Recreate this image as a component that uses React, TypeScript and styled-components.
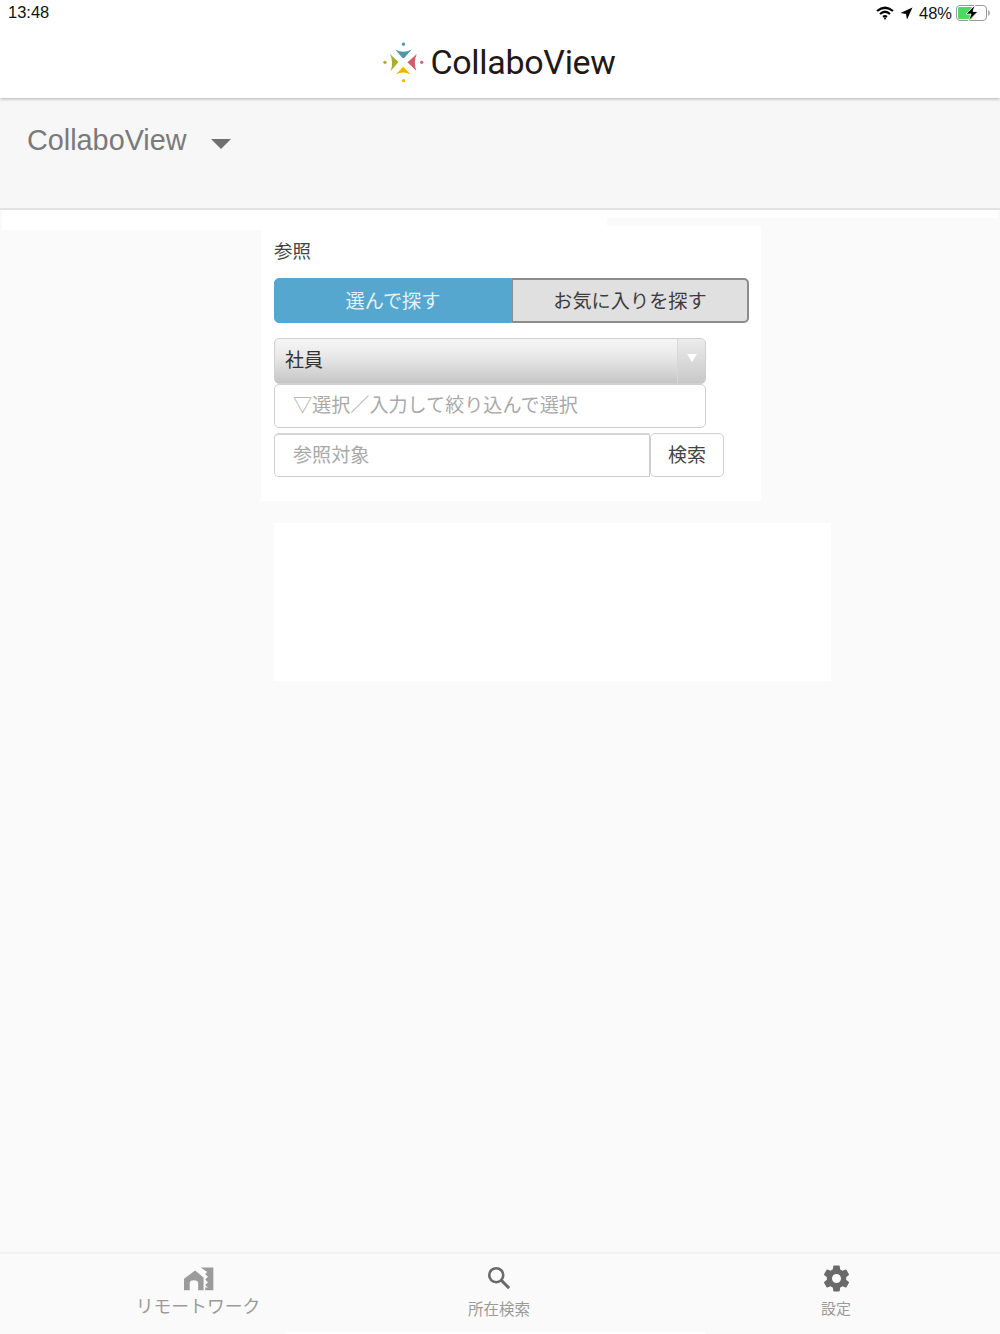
import React from "react";
import styled, { createGlobalStyle } from "styled-components";

const Global = createGlobalStyle`
  html, body { margin: 0; padding: 0; background: #fafafa; }
  body { font-family: "Noto Sans CJK JP", "Liberation Sans", sans-serif; }
  * { box-sizing: border-box; }
`;

const Page = styled.div`
  width: 1000px;
  height: 1334px;
  display: flex;
  flex-direction: column;
  overflow: hidden;
  background: #fafafa;
`;

const TopHeader = styled.header`
  height: 98px;
  background: #fff;
  box-shadow: 0 1px 3px rgba(0, 0, 0, 0.28);
  display: flex;
  flex-direction: column;
  position: relative;
  z-index: 1;
  flex: none;
`;

const StatusBar = styled.div`
  height: 26px;
  padding: 3px 9px 0 8px;
  display: flex;
  justify-content: space-between;
  align-items: flex-start;
  font-family: "Liberation Sans", sans-serif;
  font-size: 16.5px;
  line-height: 18px;
  color: #111;
`;

const StatusRight = styled.div`
  display: flex;
  align-items: center;
  height: 18px;
  margin-top: 1px;
`;

const Percent = styled.span`
  margin: 0 4px 0 6px;
`;

const BrandRow = styled.div`
  flex: 1;
  display: flex;
  align-items: flex-start;
  justify-content: center;
  padding: 16px 2px 0 0;
  gap: 5px;
`;

const BrandText = styled.span`
  font-family: "Roboto", "Liberation Sans", sans-serif;
  font-size: 34px;
  line-height: 40px;
  letter-spacing: -0.3px;
  color: #231815;
`;

const SubBar = styled.div`
  height: 112px;
  flex: none;
  background: #f7f7f7;
  border-bottom: 2px solid #e2e2e2;
  padding: 24px 0 0 27px;
  display: flex;
  align-items: flex-start;
`;

const SubTitle = styled.span`
  font-family: "Liberation Sans", sans-serif;
  font-size: 28.8px;
  line-height: 36px;
  color: #7a7a7a;
`;

const SubCaret = styled.span`
  width: 0;
  height: 0;
  margin: 17px 0 0 24px;
  border-left: 10px solid transparent;
  border-right: 10px solid transparent;
  border-top: 10px solid #707070;
`;

const Main = styled.main`
  flex: 1;
  padding: 16px 0 0 261px;
  background:
    linear-gradient(#fff, #fff) 2px 0 / 996px 8px no-repeat,
    linear-gradient(#fff, #fff) 2px 0 / 605px 16px no-repeat,
    linear-gradient(#fff, #fff) 2px 0 / 258px 20px no-repeat,
    #fafafa;
`;

const Card = styled.section`
  width: 500px;
  height: 275px;
  background: #fff;
  padding: 12px 13px 0;
`;

const CardLabel = styled.div`
  font-size: 18.5px;
  line-height: 24px;
  color: #444;
  margin-bottom: 16px;
`;

const Segment = styled.div`
  display: flex;
  width: 475px;
  height: 45px;
  margin-bottom: 15px;
`;

const SegmentButton = styled.div<{ $active?: boolean }>`
  height: 45px;
  width: ${(p) => (p.$active ? "238px" : "237px")};
  display: flex;
  align-items: center;
  justify-content: center;
  font-size: 19.2px;
  line-height: 24px;
  padding-bottom: 1px;
  border: 1px solid ${(p) => (p.$active ? "#55a7d0" : "#8c8c8c")};
  border-width: ${(p) => (p.$active ? "1px" : "2px 2px 2px 1px")};
  border-radius: ${(p) => (p.$active ? "5px 0 0 5px" : "0 5px 5px 0")};
  background: ${(p) => (p.$active ? "#55a7d0" : "#e0e0e0")};
  color: ${(p) => (p.$active ? "#e4f1f8" : "#3c3c3c")};
`;

const SelectBox = styled.div`
  width: 432px;
  height: 46px;
  display: flex;
  justify-content: space-between;
  border: 1px solid #d0d0d0;
  border-radius: 5px;
  background: linear-gradient(#f6f6f6 0%, #e8e8e8 40%, #c6c6c6 100%);
  color: #333;
  font-size: 19px;
  line-height: 40px;
  padding-left: 10px;
`;

const SelectHandle = styled.span`
  width: 28px;
  display: flex;
  align-items: center;
  justify-content: center;
  padding-bottom: 6px;
  border-left: 1px solid #d8d8d8;
  background: linear-gradient(#ececec, #c8c8c8);
  border-radius: 0 5px 5px 0;
  &::after {
    content: "";
    border-left: 5px solid transparent;
    border-right: 5px solid transparent;
    border-top: 8px solid #fff;
  }
`;

const Field = styled.div<{ $w: number }>`
  width: ${(p) => p.$w}px;
  height: 44px;
  border: 1px solid #cfcfcf;
  border-radius: 5px;
  background: #fff;
  padding-left: 18px;
  font-size: 19.1px;
  line-height: 39px;
  color: #a9a9a9;
  white-space: nowrap;
`;

const SearchRow = styled.div`
  display: flex;
  margin-top: 5px;
`;

const SearchField = styled(Field)`
  border-radius: 5px 0 0 5px;
  border-top: 2px solid #d6d6d6;
`;

const SearchButton = styled.div`
  width: 74px;
  height: 44px;
  border: 1px solid #cfcfcf;
  border-radius: 5px;
  background: #fff;
  font-size: 19px;
  line-height: 40px;
  color: #444;
  text-align: center;
`;

const ResultBox = styled.div`
  width: 557px;
  height: 158px;
  margin: 22px 0 0 13px;
  background: #fff;
`;

const TabBar = styled.nav`
  height: 82px;
  flex: none;
  display: flex;
  border-top: 2px solid #f3f3f3;
  background:
    linear-gradient(#fff, #fff) 285px 78px / 420px 4px no-repeat,
    #fafafa;
`;

const TabItem = styled.div<{ $w?: number; $skip?: number }>`
  width: ${(p) => (p.$w ? `${p.$w}px` : "auto")};
  flex: ${(p) => (p.$w ? "none" : 1)};
  margin-left: ${(p) => p.$skip ?? 0}px;
  display: flex;
  flex-direction: column;
  align-items: center;
  padding-top: 10px;
`;

const TabIcon = styled.div`
  height: 28px;
  display: flex;
  align-items: center;
  justify-content: center;
`;

const TabLabel = styled.span<{ $size: number; $gap: number }>`
  font-size: ${(p) => p.$size}px;
  line-height: 20px;
  margin-top: ${(p) => p.$gap}px;
  color: #9a9a9a;
  white-space: nowrap;
`;

const Logo = () => (
  <svg width="43" height="42" viewBox="36 36 130 126" style={{ flex: "none" }}>
    <circle cx="101" cy="42" r="5" fill="#4f97a8" />
    <circle cx="45" cy="97" r="5" fill="#a9ae2c" />
    <circle cx="156" cy="97" r="5" fill="#d2606a" />
    <circle cx="101" cy="152" r="5" fill="#f0b400" />
    <path d="M76 58 Q100 72 126 58 L103 84 H98 Z" fill="#4f97a8" />
    <path d="M78 134 L100 110 L123 134 Q100 122 78 134 Z" fill="#f0b400" />
    <path d="M60 72 L86 96 L62 123 Q72 97 60 72 Z" fill="#a9ae2c" />
    <path d="M141 72 L113 97 L140 123 Q130 97 141 72 Z" fill="#d2606a" />
  </svg>
);

const Wifi = () => (
  <svg width="18" height="14" viewBox="0 0 18 14" fill="none" stroke="#000" strokeWidth="2.2">
    <path d="M1 5 Q9 -1.5 17 5" />
    <path d="M4 8 Q9 3.5 14 8" />
    <path d="M7 10.8 Q9 9.4 11 10.8" />
    <circle cx="9" cy="12.4" r="1" fill="#000" stroke="none" />
  </svg>
);

const Arrow = () => (
  <svg width="13" height="13" viewBox="0 0 13 13" style={{ marginLeft: 6 }}>
    <path d="M12.5 0.5 L0.5 6 L6 7 L7 12.5 Z" fill="#000" />
  </svg>
);

const Battery = () => (
  <svg width="35" height="16" viewBox="0 0 35 16">
    <rect x="0.5" y="0.5" width="30" height="15" rx="3.5" fill="#fff" stroke="#999" />
    <rect x="2" y="2" width="14.5" height="12" rx="1.5" fill="#4cd964" />
    <path d="M32 5 Q34 6 34 8 Q34 10 32 11 Z" fill="#aaa" />
    <path d="M19 0 L10 9 H15 L12.5 16 L22 6.5 H17 Z" fill="#000" stroke="#fff" strokeWidth="0.8" />
  </svg>
);

const HomeIcon = () => (
  <svg width="31" height="25" viewBox="190 58 92 74">
    <path
      fillRule="evenodd"
      d="M193 96 L226 71 L251 92 V130 H235 V108 Q235 100 222 100 Q210 100 210 108 V130 H193 Z"
      fill="#9b9b9b"
    />
    <path d="M243 62 H280 V130 H256 V122 H264 L256 114 L264 106 L256 98 L264 90 L256 82 L262 76 Z" fill="#9b9b9b" />
  </svg>
);

const SearchIcon = () => (
  <svg width="24" height="24" viewBox="0 0 26 26" fill="none" stroke="#6a6a6a" strokeWidth="2.8">
    <circle cx="10" cy="10" r="7.6" />
    <path d="M15.6 15.6 L24 24" strokeWidth="3.2" />
  </svg>
);

const GearIcon = () => (
  <svg width="31" height="31" viewBox="0 0 24 24">
    <path
      fill="#6a6a6a"
      d="M19.43 12.98c.04-.32.07-.64.07-.98s-.03-.66-.07-.98l2.11-1.65c.19-.15.24-.42.12-.64l-2-3.46c-.12-.22-.39-.3-.61-.22l-2.49 1c-.52-.4-1.08-.73-1.69-.98l-.38-2.65C14.46 2.18 14.25 2 14 2h-4c-.25 0-.46.18-.49.42l-.38 2.65c-.61.25-1.17.59-1.69.98l-2.49-1c-.23-.09-.49 0-.61.22l-2 3.46c-.13.22-.07.49.12.64l2.11 1.65c-.04.32-.07.65-.07.98s.03.66.07.98l-2.11 1.65c-.19.15-.24.42-.12.64l2 3.46c.12.22.39.3.61.22l2.49-1c.52.4 1.08.73 1.69.98l.38 2.65c.03.24.24.42.49.42h4c.25 0 .46-.18.49-.42l.38-2.65c.61-.25 1.17-.59 1.69-.98l2.49 1c.23.09.49 0 .61-.22l2-3.46c.12-.22.07-.49-.12-.64l-2.11-1.65zM12 15.5c-1.93 0-3.5-1.57-3.5-3.5s1.57-3.5 3.5-3.5 3.5 1.57 3.5 3.5-1.57 3.5-3.5 3.5z"
    />
  </svg>
);

export default function App() {
  return (
    <Page>
      <Global />
      <TopHeader>
        <StatusBar>
          <span>13:48</span>
          <StatusRight>
            <Wifi />
            <Arrow />
            <Percent>48%</Percent>
            <Battery />
          </StatusRight>
        </StatusBar>
        <BrandRow>
          <Logo />
          <BrandText>CollaboView</BrandText>
        </BrandRow>
      </TopHeader>
      <SubBar>
        <SubTitle>CollaboView</SubTitle>
        <SubCaret />
      </SubBar>
      <Main>
        <Card>
          <CardLabel>参照</CardLabel>
          <Segment>
            <SegmentButton $active>選んで探す</SegmentButton>
            <SegmentButton>お気に入りを探す</SegmentButton>
          </Segment>
          <SelectBox>
            社員
            <SelectHandle />
          </SelectBox>
          <Field $w={432}>▽選択／入力して絞り込んで選択</Field>
          <SearchRow>
            <SearchField $w={376}>参照対象</SearchField>
            <SearchButton>検索</SearchButton>
          </SearchRow>
        </Card>
        <ResultBox />
      </Main>
      <TabBar>
        <TabItem $w={396}>
          <TabIcon>
            <HomeIcon />
          </TabIcon>
          <TabLabel $size={17.8} $gap={3}>リモートワーク</TabLabel>
        </TabItem>
        <TabItem $w={206}>
          <TabIcon>
            <SearchIcon />
          </TabIcon>
          <TabLabel $size={15.5} $gap={6}>所在検索</TabLabel>
        </TabItem>
        <TabItem $skip={70}>
          <TabIcon>
            <GearIcon />
          </TabIcon>
          <TabLabel $size={15} $gap={6}>設定</TabLabel>
        </TabItem>
      </TabBar>
    </Page>
  );
}
